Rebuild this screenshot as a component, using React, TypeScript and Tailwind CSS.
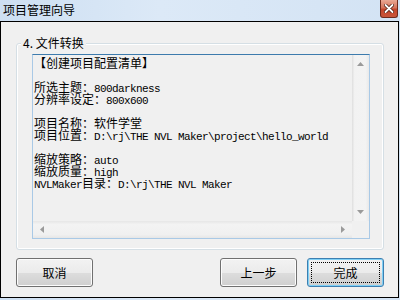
import React from "react";

const cjk = "font-['Noto_Sans_CJK_SC',sans-serif]";

const lines = [
  "【创建项目配置清单】",
  "",
  "所选主题：800darkness",
  "分辨率设定：800x600",
  "",
  "项目名称：软件学堂",
  "项目位置：D:\\rj\\THE NVL Maker\\project\\hello_world",
  "",
  "缩放策略：auto",
  "缩放质量：high",
  "NVLMaker目录：D:\\rj\\THE NVL Maker",
];

// ascii runs are half width like the dialog's bitmap font
const Mixed = ({ text }: { text: string }) => (
  <>
    {text.split(/([\x20-\x7e]+)/).map((part, i) =>
      /^[\x20-\x7e]+$/.test(part) ? (
        <span key={i} className="font-['Liberation_Mono',monospace] text-[11px] tracking-[-0.6px]">
          {part}
        </span>
      ) : (
        <span key={i}>{part}</span>
      )
    )}
  </>
);

const Arrow = ({ dir }: { dir: "up" | "down" | "left" | "right" }) => {
  const pts = {
    up: "0,4 3.5,0 7,4",
    down: "0,0 3.5,4 7,0",
    left: "4,0 0,3.5 4,7",
    right: "0,0 4,3.5 0,7",
  }[dir];
  const vert = dir === "up" || dir === "down";
  return (
    <svg width={vert ? 7 : 4} height={vert ? 4 : 7} viewBox={vert ? "0 0 7 4" : "0 0 4 7"}>
      <polygon points={pts} fill="#9a9a9a" />
    </svg>
  );
};

const Button = ({ label, focused }: { label: string; focused?: boolean }) => (
  <div
    className={`relative w-[77px] h-[29px] rounded-[3px] border flex items-center justify-center text-[12px] text-black bg-[linear-gradient(to_bottom,#f2f2f2_0%,#ebebeb_50%,#dddddd_51%,#cfcfcf_100%)] ${
      focused
        ? "border-[#3c7fb1] shadow-[inset_0_0_0_1px_#7fd0f5]"
        : "border-[#707070] shadow-[inset_0_0_0_1px_#fcfcfc]"
    }`}
  >
    {focused && <div className="absolute inset-[3px] border border-dotted border-black" />}
    <span className="relative">{label}</span>
  </div>
);

export default function App() {
  return (
    <div className={`w-[400px] h-[300px] overflow-hidden bg-[linear-gradient(to_right,#cddff2,#dce9f7_40%,#d3e3f4)] ${cjk}`}>
      {/* title bar */}
      <div className="h-[21px] flex items-start justify-between pl-[3px] pr-[2px]">
        <span className="text-[12px] leading-[20px] text-black">项目管理向导</span>
        <div className="w-[18px] h-[18px] rounded-b-[3px] border border-t-0 border-[#6e2a1c] bg-[linear-gradient(to_bottom,#eaa894,#d5745c_45%,#c4462c_55%,#c9553a)] flex items-center justify-center">
          <svg width="10" height="9" viewBox="0 0 10 9">
            <path d="M1.5 1 L8.5 8 M8.5 1 L1.5 8" stroke="#4a1a10" strokeWidth="3.4" strokeLinecap="round" />
            <path d="M1.5 1 L8.5 8 M8.5 1 L1.5 8" stroke="#ffffff" strokeWidth="1.8" strokeLinecap="round" />
          </svg>
        </div>
      </div>

      {/* client area */}
      <div className="w-[399px] h-[277px] border border-black bg-[#f0f0f0] pl-[15px] pt-[21px]">
        {/* group box */}
        <div className="relative w-[368px] h-[207px] border border-[#d5dfe5] rounded-[3px] shadow-[inset_0_0_0_1px_#ffffff]">
          <div className="absolute left-[4px] top-[-8px] px-[2px] bg-[#f0f0f0] text-[12px] leading-[14px] text-black">
            4. 文件转换
          </div>

          {/* text box */}
          <div className="ml-[15px] mt-[10px] w-[338px] h-[185px] border border-[#a9c9e6] border-t-[#3d7bad] grid grid-cols-[319px_17px] grid-rows-[166px_17px]">
            <div className="pl-[1px] pt-[2px] text-[12px] text-black overflow-hidden">
              {lines.map((l, i) => (
                <div key={i} className="h-[12px] leading-[12px] whitespace-pre">
                  <Mixed text={l} />
                </div>
              ))}
            </div>
            <div className="flex flex-col items-center justify-between py-[7px] bg-[linear-gradient(to_right,#dedede,#f2f2f2_15%,#f3f3f3_80%,#e9e9e9)]">
              <Arrow dir="up" />
              <Arrow dir="down" />
            </div>
            <div className="flex items-center justify-between px-[7px] bg-[linear-gradient(to_bottom,#e6e6e6,#f3f3f3_20%,#f0f0f0_80%,#e6e6e6)]">
              <Arrow dir="left" />
              <Arrow dir="right" />
            </div>
            <div className="bg-[#f0f0f0]" />
          </div>
        </div>

        {/* buttons */}
        <div className="mt-[8px] w-[368px] flex items-center">
          <Button label="取消" />
          <div className="flex-1" />
          <div className="flex gap-[10px]">
            <Button label="上一步" />
            <Button label="完成" focused />
          </div>
        </div>
      </div>
    </div>
  );
}
